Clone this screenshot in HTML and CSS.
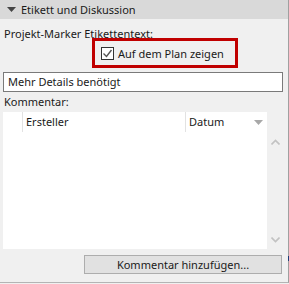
FILE: index.html
```html
<!DOCTYPE html>
<html lang="de">
<head>
    <meta charset="UTF-8">
    <meta name="viewport" content="width=device-width, initial-scale=1.0">
    <title>Etikett und Diskussion</title>
    <link rel="stylesheet" href="styles.css">
</head>
<body>

    <div class="panel">
        <div class="panel-header">
            <svg class="caret" width="9" height="5" viewBox="0 0 9 5"><path d="M0 0h9L4.5 5z" fill="#444"/></svg>
            <span>Etikett und Diskussion</span>
        </div>

        <div class="panel-body">
            <div class="label">Projekt-Marker Etikettentext:</div>

            <div class="check-row">
                <div class="highlight">
                    <span class="checkbox">
                        <svg width="11" height="11" viewBox="0 0 11 11"><path d="M1.5 5.5l3 3 5-6.5" fill="none" stroke="#555" stroke-width="1.4"/></svg>
                    </span>
                    <span>Auf dem Plan zeigen</span>
                </div>
            </div>

            <div class="text-field">Mehr Details benötigt</div>

            <div class="label label-small">Kommentar:</div>

            <div class="list">
                <div class="list-main">
                    <div class="list-head">
                        <div class="col col-icon"></div>
                        <div class="col col-author">Ersteller</div>
                        <div class="col col-date">
                            Datum
                            <svg width="9" height="5" viewBox="0 0 9 5"><path d="M0 0h9L4.5 5z" fill="#a8a8a8"/></svg>
                        </div>
                    </div>
                    <div class="list-rows"></div>
                </div>
                <div class="scrollbar">
                    <svg width="9" height="6" viewBox="0 0 9 6"><path d="M0.5 5.5L4.5 1.5l4 4" fill="none" stroke="#c2c2c2" stroke-width="1.6"/></svg>
                    <svg width="9" height="6" viewBox="0 0 9 6"><path d="M0.5 0.5L4.5 4.5l4-4" fill="none" stroke="#c2c2c2" stroke-width="1.6"/></svg>
                </div>
            </div>

            <div class="button-row">
                <button type="button">Kommentar hinzufügen...</button>
            </div>
        </div>
        <span class="edge-mark"></span>
    </div>

</body>
</html>
```

FILE: styles.css
```css
* {
    margin: 0;
    padding: 0;
    box-sizing: border-box;
}

body {
    font-family: 'Noto Sans', 'Open Sans', sans-serif;
    font-size: 11px;
    color: #1a1a1a;
    background: #f0f0f0;
    width: 289px;
    height: 284px;
    overflow: hidden;
}

.panel {
    position: relative;
    width: 289px;
    height: 283px;
    border-right: 1px solid #a0a0a0;
    border-bottom: 1px solid #b4b4b4;
    background: #f0f0f0;
}

.panel-header {
    height: 19px;
    background: #d9d9d9;
    display: flex;
    align-items: center;
    padding-left: 7px;
    gap: 5px;
    line-height: 19px;
}

.panel-body {
    padding: 5px 5px 0 3px;
}

.label {
    padding-left: 1px;
    line-height: 19px;
    height: 14px;
}

.check-row {
    display: flex;
    padding-left: 89px;
}

.highlight {
    width: 146px;
    height: 30px;
    border: 3px solid #c00000;
    display: flex;
    align-items: center;
    padding-left: 6px;
    gap: 4px;
}

.checkbox {
    width: 13px;
    height: 13px;
    border: 1px solid #333;
    background: #fff;
    display: flex;
    align-items: center;
    justify-content: center;
}

.text-field {
    margin-top: 4px;
    height: 20px;
    width: 280px;
    border: 1px solid #7a7a7a;
    background: #fff;
    padding-left: 4px;
    line-height: 18px;
}

.label-small {
    margin-top: 2px;
    height: 18px;
    line-height: 16px;
}

.list {
    display: flex;
    width: 280px;
    height: 137px;
}

.list-main {
    width: 264px;
    background: #fff;
    display: flex;
    flex-direction: column;
}

.list-head {
    display: flex;
    height: 20px;
    line-height: 20px;
}

.col {
    border-right: 1px solid #e2e2e2;
}

.col-icon {
    width: 20px;
}

.col-author {
    width: 163px;
    padding-left: 3px;
}

.col-date {
    flex: 1;
    border-right: none;
    padding-left: 3px;
    display: flex;
    align-items: center;
    justify-content: space-between;
    padding-right: 4px;
}

.list-rows {
    flex: 1;
}

.scrollbar {
    width: 16px;
    display: flex;
    flex-direction: column;
    justify-content: space-between;
    align-items: center;
    padding: 27px 0 6px 1px;
}

.button-row {
    display: flex;
    justify-content: flex-end;
    padding-top: 6px;
}

button {
    width: 198px;
    height: 19px;
    margin-right: 1px;
    background: #e1e1e1;
    border: 1px solid #adadad;
    font-family: inherit;
    font-size: 11px;
    color: #1a1a1a;
    line-height: 16px;
}

.edge-mark {
    position: absolute;
    right: -1px;
    top: 256px;
    width: 1px;
    height: 5px;
    background: #1c3d7a;
}
```
